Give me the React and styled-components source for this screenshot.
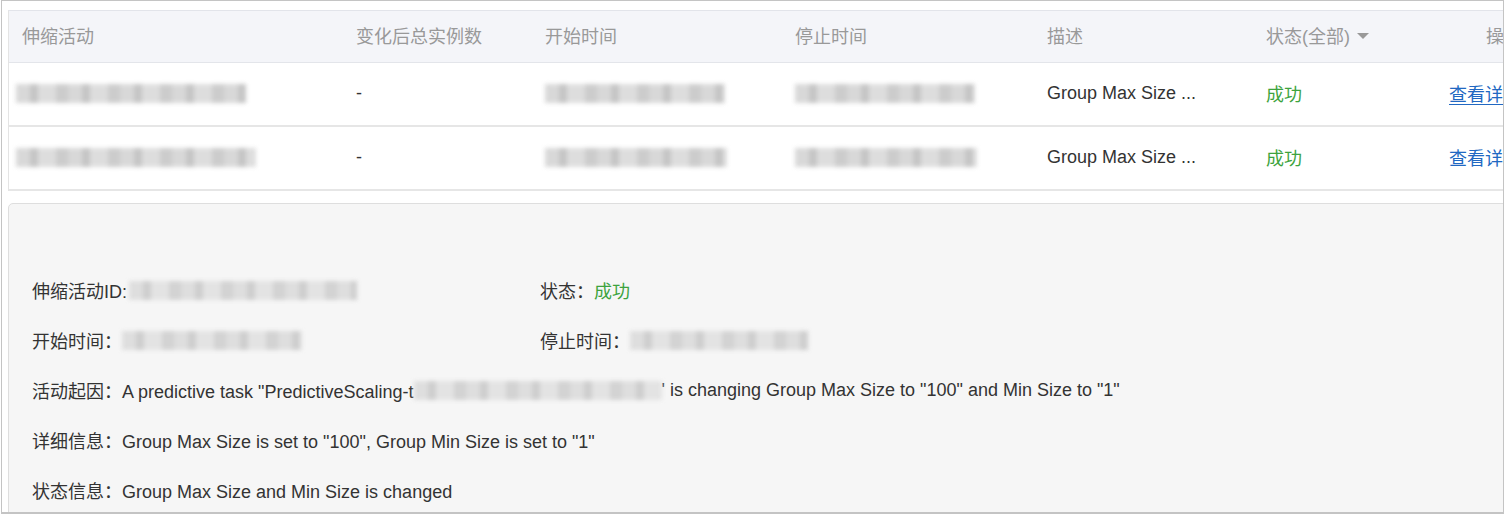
import React from 'react';
import styled, { createGlobalStyle } from 'styled-components';

const GlobalStyle = createGlobalStyle`
    body {
        margin: 0;
        background: #ffffff;
        font-family: 'Liberation Sans', 'Noto Sans CJK SC', sans-serif;
    }
`;

const COLS = '334px 189px 250px 252px 219px 183px 160px';

const rows = [
    { name: 230, start: 180, stop: 180, link: true },
    { name: 240, start: 182, stop: 182, link: false },
];

function App() {
    return (
        <>
            <GlobalStyle />
            <SCFrame>
                <SCTable>
                    <SCHead>
                        <SCHeadCell>伸缩活动</SCHeadCell>
                        <SCHeadCell>变化后总实例数</SCHeadCell>
                        <SCHeadCell>开始时间</SCHeadCell>
                        <SCHeadCell>停止时间</SCHeadCell>
                        <SCHeadCell>描述</SCHeadCell>
                        <SCHeadCell>
                            状态(全部)
                            <SCCaret />
                        </SCHeadCell>
                        <SCHeadCell $pad={50}>操作</SCHeadCell>
                    </SCHead>
                    {rows.map((r, i) => (
                        <SCRow key={i}>
                            <SCCell $pad={7}>
                                <SCBlur style={{ width: r.name }} />
                            </SCCell>
                            <SCCell>-</SCCell>
                            <SCCell>
                                <SCBlur style={{ width: r.start }} />
                            </SCCell>
                            <SCCell>
                                <SCBlur style={{ width: r.stop }} />
                            </SCCell>
                            <SCCell>Group Max Size ...</SCCell>
                            <SCCell>
                                <SCSuccess>成功</SCSuccess>
                            </SCCell>
                            <SCCell>
                                <SCLink $underline={r.link}>查看详情</SCLink>
                            </SCCell>
                        </SCRow>
                    ))}
                </SCTable>

                <SCDetail>
                    <SCDetailGrid>
                        <SCField>
                            伸缩活动ID:
                            <SCBlur $light style={{ width: 228, marginLeft: 2 }} />
                        </SCField>
                        <SCField>
                            状态：<SCSuccess>成功</SCSuccess>
                        </SCField>
                        <SCField>
                            开始时间：
                            <SCBlur $light style={{ width: 180 }} />
                        </SCField>
                        <SCField>
                            停止时间：
                            <SCBlur $light style={{ width: 178 }} />
                        </SCField>
                        <SCWide>
                            活动起因：A predictive task "PredictiveScaling-t
                            <SCBlur $light style={{ width: 248 }} />
                            ' is changing Group Max Size to "100" and Min Size to "1"
                        </SCWide>
                        <SCWide>
                            详细信息：Group Max Size is set to "100", Group Min Size is set to "1"
                        </SCWide>
                        <SCWide>状态信息：Group Max Size and Min Size is changed</SCWide>
                    </SCDetailGrid>
                </SCDetail>
            </SCFrame>
        </>
    );
}

const SCFrame = styled.div`
    box-sizing: border-box;
    width: 1503px;
    height: 514px;
    margin-left: 1px;
    border: 1px solid #c4c4c4;
    border-bottom-width: 2px;
    padding: 9px 0 0 6px;
    overflow: hidden;
    background: #ffffff;
`;

const SCTable = styled.div`
    width: 1600px;
    border-left: 1px solid #e4e4e4;
    border-top: 1px solid #e2e4ea;
`;

const SCHead = styled.div`
    display: grid;
    grid-template-columns: ${COLS};
    height: 51px;
    background: #f4f5f9;
    border-bottom: 1px solid #e3e5ea;
`;

const SCHeadCell = styled.div`
    display: flex;
    align-items: center;
    padding-left: ${(p) => p.$pad ?? 13}px;
    padding-bottom: 3px;
    font-size: 18px;
    color: #999999;
    white-space: nowrap;
`;

const SCCaret = styled.span`
    width: 0;
    height: 0;
    margin-left: 7px;
    margin-top: 2px;
    border-left: 6px solid transparent;
    border-right: 6px solid transparent;
    border-top: 6px solid #999999;
`;

const SCRow = styled.div`
    display: grid;
    grid-template-columns: ${COLS};
    height: 62px;
    border-bottom: 2px solid #e6e6e6;
`;

const SCCell = styled.div`
    display: flex;
    align-items: center;
    padding-left: ${(p) => p.$pad ?? 13}px;
    padding-bottom: 2px;
    font-size: 18px;
    color: #333333;
    white-space: nowrap;
`;

const SCBlur = styled.span`
    display: inline-block;
    height: 19px;
    vertical-align: middle;
    background: repeating-linear-gradient(
        90deg,
        ${(p) => (p.$light ? '#dadada' : '#d2d2d2')} 0 14px,
        ${(p) => (p.$light ? '#c8c8c8' : '#bcbcbc')} 14px 22px,
        ${(p) => (p.$light ? '#e0e0e0' : '#d8d8d8')} 22px 40px,
        ${(p) => (p.$light ? '#cdcdcd' : '#c4c4c4')} 40px 52px
    );
    filter: blur(2px);
    opacity: 0.85;
`;

const SCSuccess = styled.span`
    color: #3da33d;
`;

const SCLink = styled.span`
    color: #2168c2;
    text-decoration: ${(p) => (p.$underline ? 'underline' : 'none')};
    text-underline-offset: 3px;
`;

const SCDetail = styled.div`
    margin-top: 12px;
    width: 1600px;
    min-height: 400px;
    border: 1px solid #dedede;
    border-radius: 5px;
    background: #f6f6f6;
    padding: 61px 0 0 23px;
`;

const SCDetailGrid = styled.div`
    display: grid;
    grid-template-columns: 508px 600px;
    grid-auto-rows: 50px;
`;

const SCField = styled.div`
    display: flex;
    align-items: center;
    font-size: 18px;
    color: #333333;
    white-space: nowrap;
`;

const SCWide = styled(SCField)`
    grid-column: 1 / -1;
`;

export default App;
